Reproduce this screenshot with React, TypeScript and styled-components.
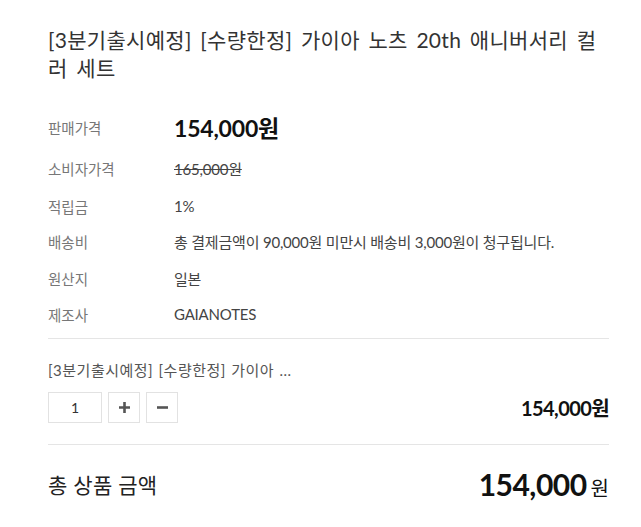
import React from "react";
import styled, { createGlobalStyle } from "styled-components";

const Global = createGlobalStyle`
  html, body { margin: 0; padding: 0; background: #fff; }
  body { font-family: "Lato", "Noto Sans CJK KR", sans-serif; color: #333; }
`;

const Page = styled.div`
  width: 561px;
  padding: 26px 32px 0 48px;
`;

const Title = styled.h1`
  margin: 0;
  font-size: 21px;
  line-height: 28px;
  font-weight: 400;
  color: #333;
  letter-spacing: 0.3px;
  word-spacing: 3px;
`;

const InfoTable = styled.div`
  display: grid;
  grid-template-columns: 126px 1fr;
  margin-top: 26px;
  padding-bottom: 6px;
  border-bottom: 1px solid #e5e5e5;
`;

const Label = styled.div<{ $h: number }>`
  font-size: 14.5px;
  color: #777;
  height: ${(p) => p.$h}px;
  display: flex;
  align-items: center;
`;

const Value = styled.div<{ $h: number; $big?: boolean; $strike?: boolean }>`
  height: ${(p) => p.$h}px;
  display: flex;
  align-items: center;
  font-size: ${(p) => (p.$big ? "23px" : "15px")};
  font-weight: ${(p) => (p.$big ? 700 : 400)};
  color: ${(p) => (p.$big ? "#111" : "#444")};
  text-decoration: ${(p) => (p.$strike ? "line-through" : "none")};
  letter-spacing: -0.2px;
`;

const Option = styled.div`
  padding: 21px 0 21px;
  border-bottom: 1px solid #e5e5e5;
`;

const OptionName = styled.div`
  font-size: 15px;
  color: #555;
  line-height: 20px;
  letter-spacing: 0.5px;
  word-spacing: 1px;
`;

const OptionRow = styled.div`
  display: flex;
  align-items: center;
  justify-content: space-between;
  margin-top: 12px;
`;

const Qty = styled.div`
  display: flex;
  gap: 6px;
`;

const QtyInput = styled.div`
  width: 54px;
  height: 31px;
  box-sizing: border-box;
  border: 1px solid #e2e2e2;
  display: flex;
  align-items: center;
  justify-content: center;
  font-size: 14px;
  color: #333;
`;

const QtyButton = styled.button`
  width: 32px;
  height: 31px;
  box-sizing: border-box;
  border: 1px solid #e2e2e2;
  background: #fff;
  padding: 0;
  display: flex;
  align-items: center;
  justify-content: center;
`;

const OptionPrice = styled.div`
  font-size: 20px;
  font-weight: 700;
  color: #111;
  letter-spacing: -0.6px;
`;

const Total = styled.div`
  display: flex;
  align-items: center;
  justify-content: space-between;
  padding-top: 21px;
`;

const TotalLabel = styled.div`
  font-size: 21px;
  color: #222;
  letter-spacing: 0.3px;
`;

const TotalPrice = styled.div`
  display: flex;
  align-items: baseline;
  color: #111;
`;

const TotalNum = styled.span`
  font-size: 30px;
  font-weight: 700;
  letter-spacing: -0.5px;
`;

const TotalUnit = styled.span`
  font-size: 20px;
  margin-left: 4px;
`;

const rows: { label: string; value: string; h: number; big?: boolean; strike?: boolean }[] = [
  { label: "판매가격", value: "154,000원", h: 38, big: true },
  { label: "소비자가격", value: "165,000원", h: 44, strike: true },
  { label: "적립금", value: "1%", h: 32 },
  { label: "배송비", value: "총 결제금액이 90,000원 미만시 배송비 3,000원이 청구됩니다.", h: 38 },
  { label: "원산지", value: "일본", h: 36 },
  { label: "제조사", value: "GAIANOTES", h: 36 },
];

export default function App() {
  return (
    <>
      <Global />
      <Page>
        <Title>[3분기출시예정] [수량한정] 가이아 노츠 20th 애니버서리 컬러 세트</Title>
        <InfoTable>
          {rows.map((r) => (
            <React.Fragment key={r.label}>
              <Label $h={r.h}>{r.label}</Label>
              <Value $h={r.h} $big={r.big} $strike={r.strike}>
                {r.value}
              </Value>
            </React.Fragment>
          ))}
        </InfoTable>
        <Option>
          <OptionName>[3분기출시예정] [수량한정] 가이아 ...</OptionName>
          <OptionRow>
            <Qty>
              <QtyInput>1</QtyInput>
              <QtyButton aria-label="plus">
                <svg width="13" height="13" viewBox="0 0 13 13">
                  <path d="M6.5 1v11M1 6.5h11" stroke="#555" strokeWidth="2.6" />
                </svg>
              </QtyButton>
              <QtyButton aria-label="minus">
                <svg width="13" height="13" viewBox="0 0 13 13">
                  <path d="M1 6.5h11" stroke="#555" strokeWidth="2.6" />
                </svg>
              </QtyButton>
            </Qty>
            <OptionPrice>154,000원</OptionPrice>
          </OptionRow>
        </Option>
        <Total>
          <TotalLabel>총 상품 금액</TotalLabel>
          <TotalPrice>
            <TotalNum>154,000</TotalNum>
            <TotalUnit>원</TotalUnit>
          </TotalPrice>
        </Total>
      </Page>
    </>
  );
}
